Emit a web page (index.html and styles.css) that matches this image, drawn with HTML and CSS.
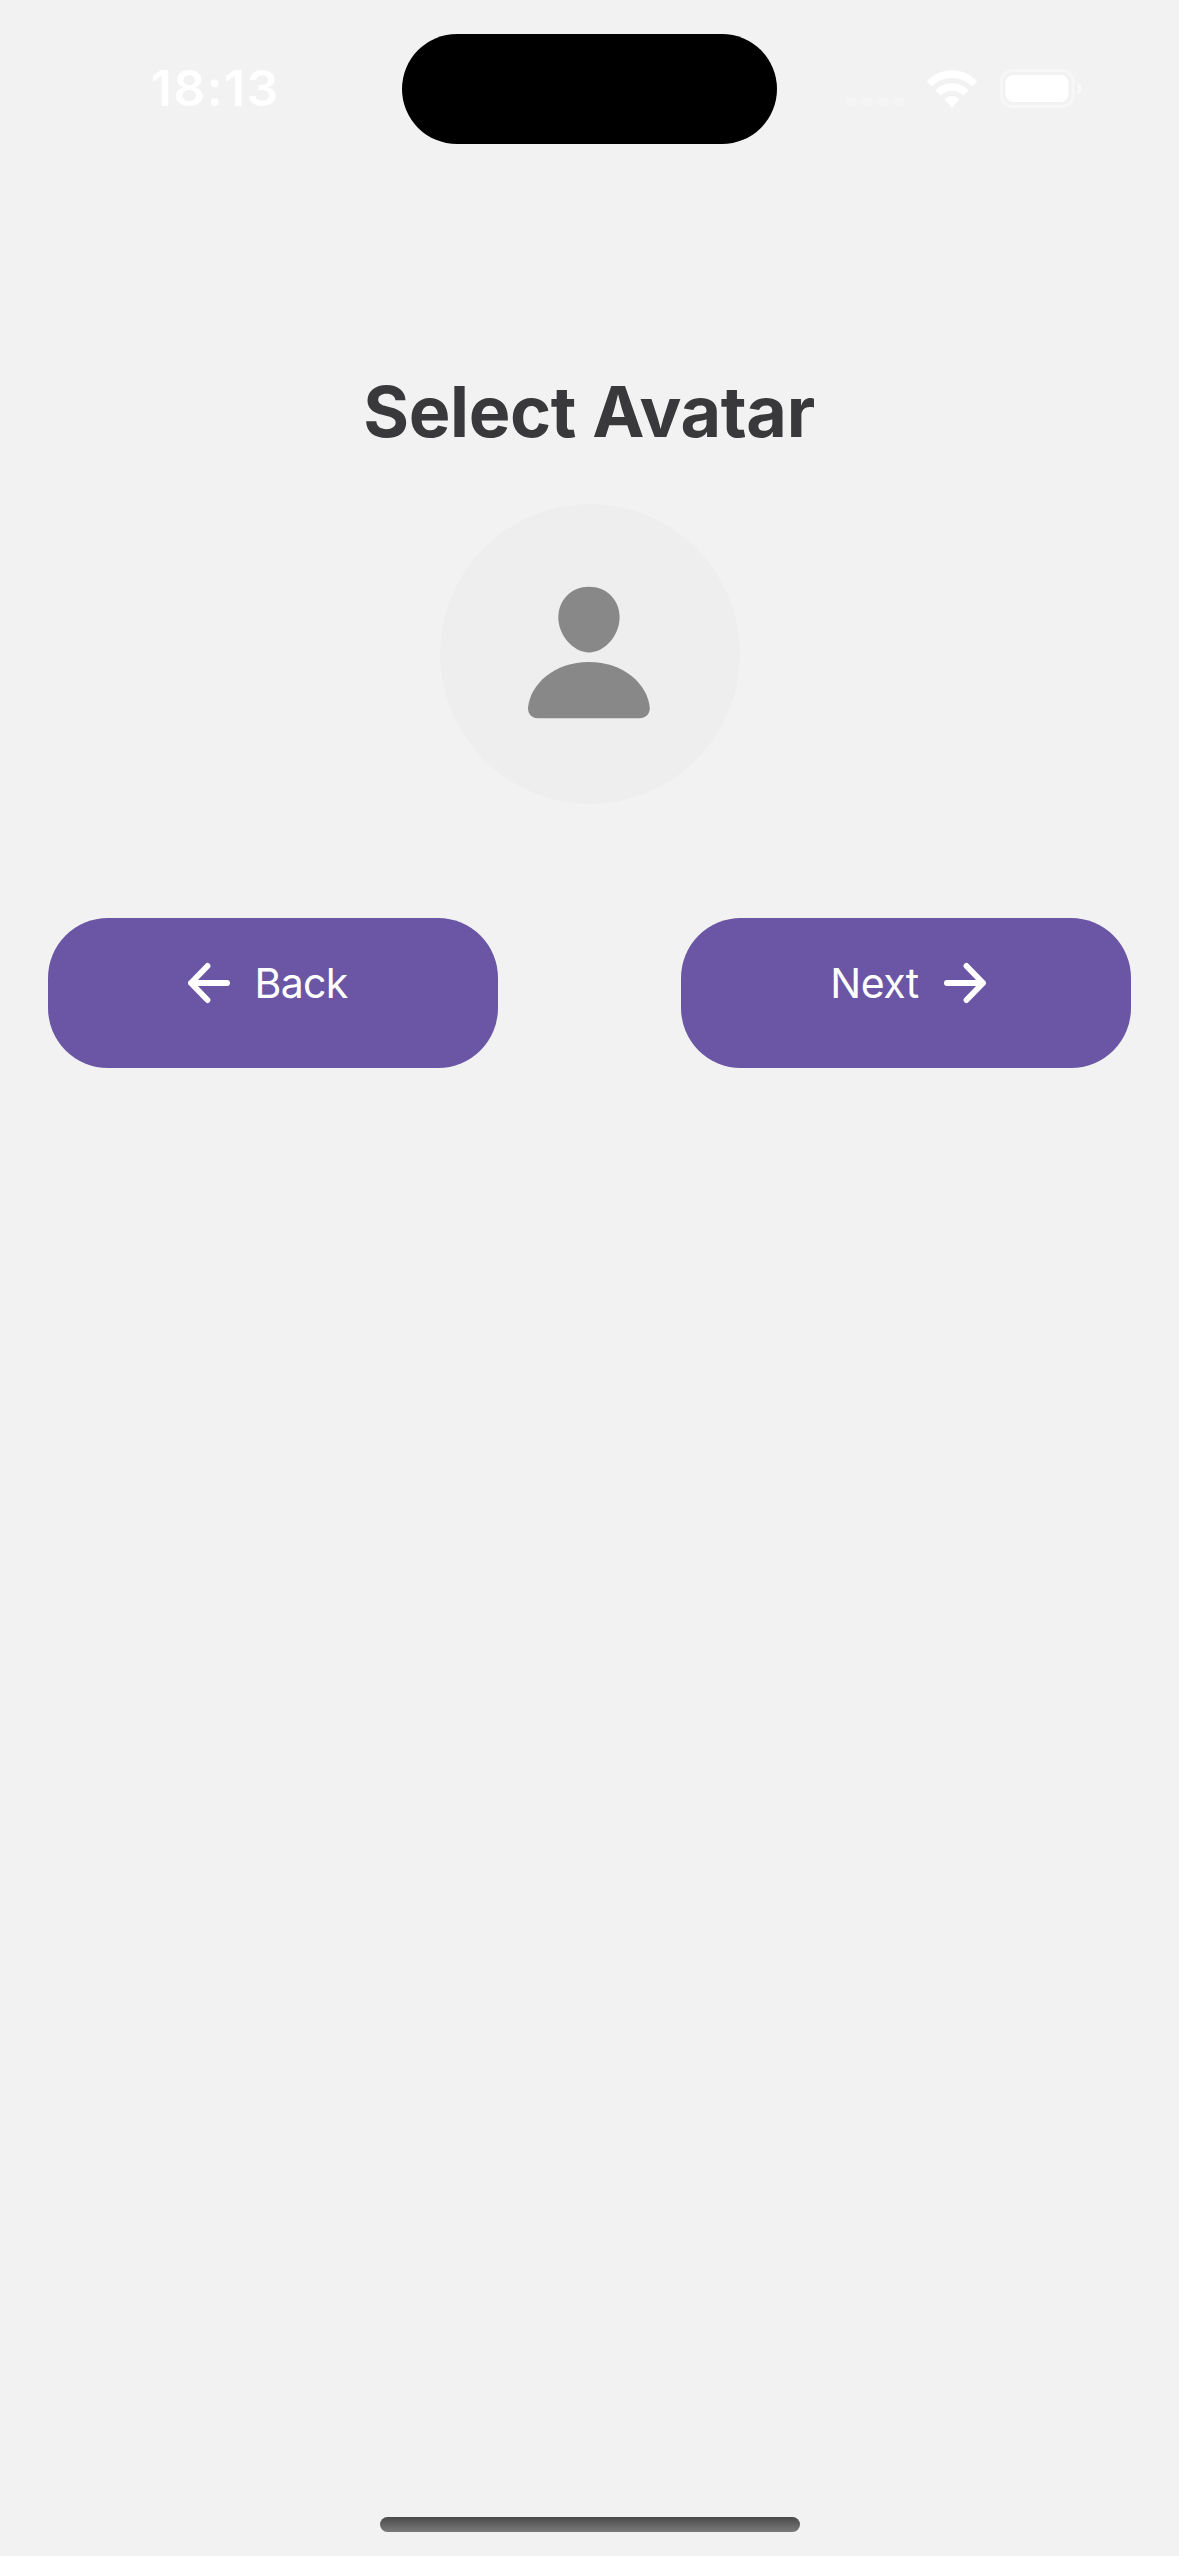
FILE: index.html
```html
<!DOCTYPE html>
<html lang="en">
<head>
<meta charset="utf-8">
<title>Select Avatar</title>
<link rel="stylesheet" href="styles.css">
</head>
<body>
<div class="screen">
  <header class="status-bar">
    <div class="status-side"><time class="clock">18:13</time></div>
    <div class="island"></div>
    <div class="status-side">
      <svg class="status-icons" width="236" height="40" viewBox="0 0 236 40" fill="#fff">
        <g opacity=".3">
          <circle cx="6.500" cy="32.700" r="5.300"/><circle cx="22.500" cy="32.700" r="5.300"/><circle cx="38.500" cy="32.700" r="5.300"/><circle cx="54.500" cy="32.700" r="5.300"/>
        </g>
        <path d="M107 38.400 99.400 30.600C103.400 25.900 110.600 25.900 114.600 30.600ZM90.400 21.500C99.400 11.800 114.600 11.800 123.600 21.500L118.400 26.500C112.400 20 101.600 20 95.600 26.500ZM81.800 12.400C95.800-2.400 118.200-2.400 132.200 12.400L126.900 17.300C115.900 5.800 98.100 5.800 87.100 17.300Z"/>
        <rect x="156.300" y="1.500" width="72" height="36" rx="11.500" fill="none" stroke="#fff" stroke-width="3" opacity=".4"/>
        <rect x="160.500" y="6" width="63" height="27" rx="7.500"/>
        <path d="M232.500 13.300C237.800 15.500 237.800 23.500 232.500 25.700Z" opacity=".5"/>
      </svg>
    </div>
  </header>
  <main class="content">
    <h1 class="title">Select Avatar</h1>
    <div class="avatar">
      <svg class="avatar-icon" width="124" height="134" viewBox="0 0 124 134">
        <path d="M62 .8C79.500.8 92.600 14 92.600 31.500C92.600 49 78 66.400 62 66.400S31.300 49 31.300 31.500C31.300 14 44.500.8 62 .8Z"/>
        <path d="M62 76C27.500 76 3 98 1 122C1 128 5 132.300 10.500 132.300H112.500C118.500 132.300 122.800 128 122.800 122C120.800 98 96.500 76 62 76Z"/>
      </svg>
    </div>
    <div class="actions">
      <button class="button button-back">
        <svg width="44" height="42" viewBox="0 0 44 42" class="arrow"><path d="M40.100 21H4M20.500 3.900 4 21l16.500 17.100"/></svg>
        <span>Back</span>
      </button>
      <button class="button button-next">
        <span>Next</span>
        <svg width="44" height="42" viewBox="0 0 44 42" class="arrow"><path d="M3.900 21H40M23.500 3.900 40 21 23.500 38.100"/></svg>
      </button>
    </div>
  </main>
  <div class="home-indicator"></div>
</div>
</body>
</html>
```
FILE: styles.css
```css
* { box-sizing: border-box; }
body { margin: 0; background: #f2f2f2; font-family: Inter, "Liberation Sans", sans-serif; }

.screen { height: 2556px; display: flex; flex-direction: column; align-items: center; }

.status-bar { width: 100%; height: 177px; padding-top: 33.5px; display: grid; grid-template-columns: 1fr 375px 1fr; align-items: start; }
.status-side { height: 110.5px; display: flex; }
.clock { margin: 24.5px 0 0 150.7px; font-size: 50px; line-height: 60px; font-weight: 600; letter-spacing: 1.4px; color: #fff; }
.island { height: 110.5px; border-radius: 56px; background: #000; }
.status-icons { margin: 35px 0 0 68px; }

.content { width: 100%; flex: 1; padding: 192px 48px 0; display: flex; flex-direction: column; align-items: center; }
.title { margin: 0; height: 135px; padding-right: 1px; font-size: 70px; line-height: 86px; font-weight: 700; letter-spacing: -.35px; color: #39393b; }
.avatar { width: 300px; height: 300px; border-radius: 50%; background: #eee; display: flex; justify-content: center; padding: 82px 1px 0 0; }
.avatar-icon { fill: #888; }

.actions { width: 100%; margin-top: 114px; display: flex; justify-content: space-between; }
.button { width: 450px; height: 150px; padding: 0 0 20px; border: 0; border-radius: 60px; background: #6a56a5; color: #fff; font: 400 41px/50px Inter, "Liberation Sans", sans-serif; display: flex; justify-content: center; align-items: center; gap: 24px; }
.button-back { padding-right: 12px; letter-spacing: -.7px; }
.button-next { padding-left: 5px; letter-spacing: -.5px; }
.arrow { fill: none; stroke: #fff; stroke-width: 5.8; stroke-linecap: round; stroke-linejoin: round; }

.home-indicator { width: 420px; height: 15px; margin-bottom: 24px; border-radius: 8px; background: linear-gradient(#4a4a4a, #7a7a7a); }
```
